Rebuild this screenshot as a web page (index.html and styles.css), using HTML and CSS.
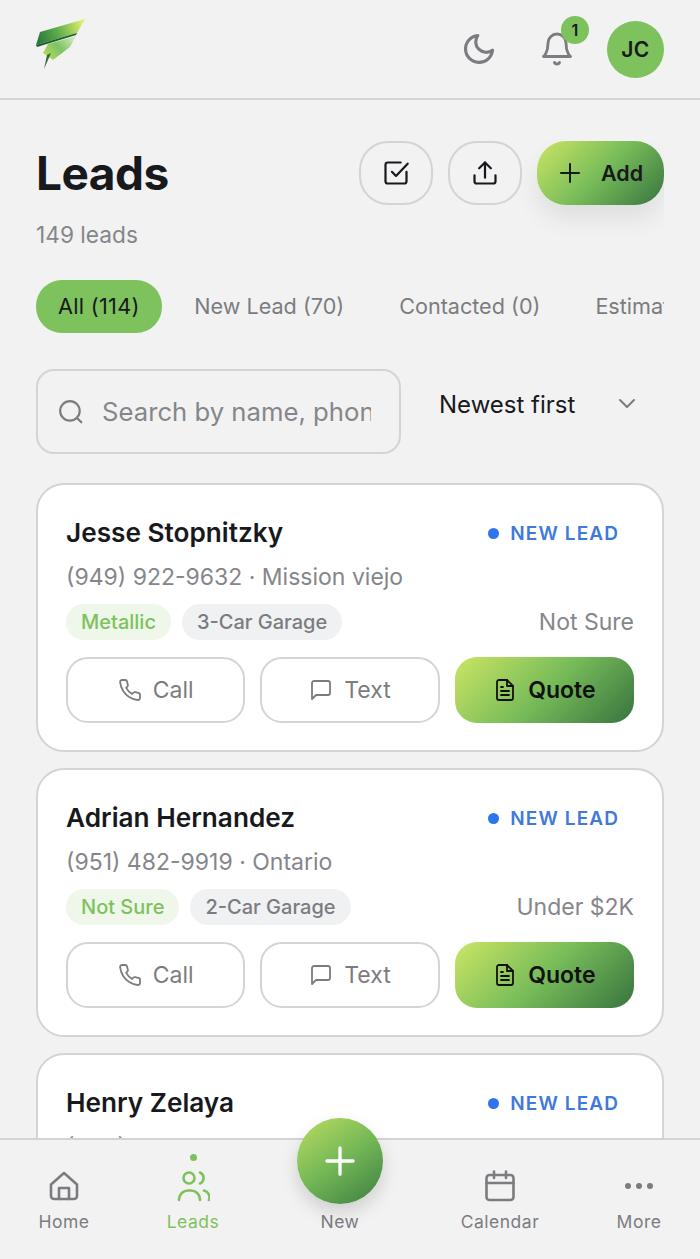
FILE: index.html
```html
<!DOCTYPE html>
<html lang="en">
  <head>
    <meta charset="UTF-8" />
    <meta name="viewport" content="width=device-width, initial-scale=1.0" />
    <title>Leads</title>
    <link rel="stylesheet" href="styles.css">
  </head>
  <body>
    <svg width="0" height="0" class="defs">
      <defs>
        <linearGradient id="wing-top" x1="0" y1="0.6" x2="1" y2="0.4">
          <stop offset="0" stop-color="#2a7a3a" />
          <stop offset="0.45" stop-color="#5fae4c" />
          <stop offset="1" stop-color="#dcef6c" />
        </linearGradient>
        <linearGradient id="wing-mid" x1="0" y1="0.8" x2="1" y2="0.2">
          <stop offset="0" stop-color="#b4dc60" />
          <stop offset="0.5" stop-color="#7fc262" />
          <stop offset="1" stop-color="#cfe9b8" />
        </linearGradient>
      </defs>
    </svg>

    <header class="topbar">
      <svg class="logo" viewBox="0 0 50 52">
        <polygon points="7,35 12,26 40,18 34,29 17,42" fill="url(#wing-mid)" />
        <polygon points="8,51 11,37 15,35" fill="#2f6b38" />
        <polygon points="0,27 4,14 49,1 41,15" fill="url(#wing-top)" />
        <polygon points="0,27 41,15 40,17 1,29" fill="#1d5f30" />
      </svg>
      <div class="topbar-right">
        <svg class="icon moon" viewBox="0 0 24 24"><path d="M21 12.8A9 9 0 1 1 11.2 3a7 7 0 0 0 9.8 9.8z" /></svg>
        <div class="bell">
          <svg class="icon" viewBox="0 0 24 24"><path d="M6 8a6 6 0 0 1 12 0c0 7 3 9 3 9H3s3-2 3-9" /><path d="M10.3 21a1.9 1.9 0 0 0 3.4 0" /></svg>
          <span class="bell-badge">1</span>
        </div>
        <div class="avatar">JC</div>
      </div>
    </header>

    <main class="page">
      <section class="page-head">
        <div>
          <h1>Leads</h1>
          <p class="lead-count">149 leads</p>
        </div>
        <div class="page-actions">
          <button class="round-btn">
            <svg class="icon" viewBox="0 0 24 24"><path d="M21 11v8a2 2 0 0 1-2 2H5a2 2 0 0 1-2-2V5a2 2 0 0 1 2-2h11" /><path d="M8.5 11l3.5 3.5L22 4" /></svg>
          </button>
          <button class="round-btn">
            <svg class="icon" viewBox="0 0 24 24"><path d="M3 14v5a2 2 0 0 0 2 2h14a2 2 0 0 0 2-2v-5" /><path d="M12 16V3" /><path d="M7 8l5-5 5 5" /></svg>
          </button>
          <button class="add-btn">
            <svg class="icon" viewBox="0 0 24 24"><path d="M12 3v18M3 12h18" /></svg>
            Add
          </button>
        </div>
      </section>

      <nav class="tabs">
        <div class="tab active">All (114)</div>
        <div class="tab">New Lead (70)</div>
        <div class="tab">Contacted (0)</div>
        <div class="tab">Estimate Sent (12)</div>
      </nav>

      <section class="filters">
        <div class="search">
          <svg class="icon" viewBox="0 0 24 24"><circle cx="11" cy="11" r="9" /><path d="M21.5 21.5l-4-4" /></svg>
          <input type="text" placeholder="Search by name, phone or city" />
        </div>
        <div class="sort">
          <span>Newest first</span>
          <svg class="icon" viewBox="0 0 24 24"><path d="M5 8l7 7 7-7" /></svg>
        </div>
      </section>

      <article class="card">
        <div class="card-row">
          <h2>Jesse Stopnitzky</h2>
          <span class="status">NEW LEAD</span>
        </div>
        <p class="contact">(949) 922-9632 · Mission viejo</p>
        <div class="card-row tag-row">
          <div class="tags">
            <span class="tag green">Metallic</span>
            <span class="tag">3-Car Garage</span>
          </div>
          <span class="budget">Not Sure</span>
        </div>
        <div class="card-actions">
          <button class="card-btn">
            <svg class="icon" viewBox="0 0 24 24"><path d="M22 17v3a2 2 0 0 1-2.2 2 19.8 19.8 0 0 1-8.6-3.1 19.5 19.5 0 0 1-6-6A19.8 19.8 0 0 1 2.1 4.2 2 2 0 0 1 4.1 2h3a2 2 0 0 1 2 1.7c.1 1 .4 1.9.7 2.8a2 2 0 0 1-.5 2.1L8.1 9.9a16 16 0 0 0 6 6l1.3-1.2a2 2 0 0 1 2.1-.5c.9.3 1.8.6 2.8.7a2 2 0 0 1 1.7 2.1z" /></svg>
            Call
          </button>
          <button class="card-btn">
            <svg class="icon" viewBox="0 0 24 24"><path d="M21 15a2 2 0 0 1-2 2H7l-4 4V5a2 2 0 0 1 2-2h14a2 2 0 0 1 2 2z" /></svg>
            Text
          </button>
          <button class="card-btn quote">
            <svg class="icon" viewBox="0 0 24 24"><path d="M14 2H6a2 2 0 0 0-2 2v16a2 2 0 0 0 2 2h12a2 2 0 0 0 2-2V8z" /><path d="M14 2v6h6" /><path d="M8 13h8M8 17h8M8 9h2" /></svg>
            Quote
          </button>
        </div>
      </article>

      <article class="card">
        <div class="card-row">
          <h2>Adrian Hernandez</h2>
          <span class="status">NEW LEAD</span>
        </div>
        <p class="contact">(951) 482-9919 · Ontario</p>
        <div class="card-row tag-row">
          <div class="tags">
            <span class="tag green">Not Sure</span>
            <span class="tag">2-Car Garage</span>
          </div>
          <span class="budget">Under $2K</span>
        </div>
        <div class="card-actions">
          <button class="card-btn">
            <svg class="icon" viewBox="0 0 24 24"><path d="M22 17v3a2 2 0 0 1-2.2 2 19.8 19.8 0 0 1-8.6-3.1 19.5 19.5 0 0 1-6-6A19.8 19.8 0 0 1 2.1 4.2 2 2 0 0 1 4.1 2h3a2 2 0 0 1 2 1.7c.1 1 .4 1.9.7 2.8a2 2 0 0 1-.5 2.1L8.1 9.9a16 16 0 0 0 6 6l1.3-1.2a2 2 0 0 1 2.1-.5c.9.3 1.8.6 2.8.7a2 2 0 0 1 1.7 2.1z" /></svg>
            Call
          </button>
          <button class="card-btn">
            <svg class="icon" viewBox="0 0 24 24"><path d="M21 15a2 2 0 0 1-2 2H7l-4 4V5a2 2 0 0 1 2-2h14a2 2 0 0 1 2 2z" /></svg>
            Text
          </button>
          <button class="card-btn quote">
            <svg class="icon" viewBox="0 0 24 24"><path d="M14 2H6a2 2 0 0 0-2 2v16a2 2 0 0 0 2 2h12a2 2 0 0 0 2-2V8z" /><path d="M14 2v6h6" /><path d="M8 13h8M8 17h8M8 9h2" /></svg>
            Quote
          </button>
        </div>
      </article>

      <article class="card">
        <div class="card-row">
          <h2>Henry Zelaya</h2>
          <span class="status">NEW LEAD</span>
        </div>
        <p class="contact">(909) 904-4710 · Al</p>
      </article>
    </main>

    <nav class="bottom-nav">
      <div class="nav-item">
        <svg class="icon" viewBox="0 0 32 32"><path d="M3 14.5 16 3l13 11.500V26a3 3 0 0 1-3 3H6a3 3 0 0 1-3-3z" /><path d="M11 29V18h10v11" /></svg>
        <span>Home</span>
      </div>
      <div class="nav-item active">
        <i class="nav-dot"></i>
        <svg class="icon leads-icon" viewBox="0 0 34 32"><circle cx="13" cy="8" r="5.500" /><path d="M24 2.500a6 6 0 0 1 0 11" /><path d="M3 30v-1a9 9 0 0 1 9-8.500h3a9 9 0 0 1 9 8.500v1" /><path d="M28 20.500a7 7 0 0 1 5 9.500" /></svg>
        <span>Leads</span>
      </div>
      <div class="nav-item nav-new">
        <button class="fab">
          <svg viewBox="0 0 32 32"><path d="M16 2v28M2 16h28" /></svg>
        </button>
        <span>New</span>
      </div>
      <div class="nav-item">
        <svg class="icon" viewBox="0 0 32 32"><rect x="2.500" y="5" width="27" height="25" rx="3" /><path d="M2.500 13h27M10 1.500V8M22 1.500V8" /></svg>
        <span>Calendar</span>
      </div>
      <div class="nav-item">
        <svg class="icon dots" viewBox="0 0 32 32"><circle cx="5" cy="16" r="3" /><circle cx="16" cy="16" r="3" /><circle cx="27" cy="16" r="3" /></svg>
        <span>More</span>
      </div>
    </nav>
  </body>
</html>
```

FILE: styles.css
```css
* {
  box-sizing: border-box;
}

html,
body {
  height: 100%;
}

body {
  margin: 0;
  position: relative;
  overflow: hidden;
  display: flex;
  flex-direction: column;
  font-family: "Inter", "Liberation Sans", sans-serif;
  background-color: #f2f2f3;
  color: #18191d;
}

button {
  font-family: inherit;
  cursor: pointer;
}

.defs {
  position: absolute;
}

.icon {
  fill: none;
  stroke: currentColor;
  stroke-width: 2;
  stroke-linecap: round;
  stroke-linejoin: round;
  flex: none;
}

/* top bar */
.topbar {
  height: 100px;
  flex: none;
  display: flex;
  align-items: center;
  justify-content: space-between;
  padding: 0 36px;
  border-bottom: 2px solid #d3d4d6;
}

.logo {
  width: 50px;
  height: 52px;
  margin-bottom: 10px;
}

.topbar-right {
  display: flex;
  align-items: center;
}

.moon {
  width: 36px;
  height: 36px;
  color: #7b7c80;
  stroke-width: 2.100;
}

.bell {
  position: relative;
  width: 36px;
  height: 36px;
  margin-left: 42px;
  color: #7b7c80;
}

.bell .icon {
  width: 36px;
  height: 36px;
  stroke-width: 1.900;
}

.bell-badge {
  position: absolute;
  top: -15px;
  left: 22px;
  width: 28px;
  height: 28px;
  border-radius: 50%;
  background-color: #7dc25c;
  color: #18191d;
  font-size: 16px;
  font-weight: 600;
  display: flex;
  align-items: center;
  justify-content: center;
}

.avatar {
  width: 57px;
  height: 57px;
  margin-left: 32px;
  border-radius: 50%;
  background-color: #7dc25c;
  font-size: 21px;
  font-weight: 600;
  letter-spacing: 0.5px;
  display: flex;
  align-items: center;
  justify-content: center;
}

/* page */
.page {
  flex: 1;
  min-height: 0;
  overflow: hidden;
  padding: 41px 36px 0;
}

.page-head {
  display: flex;
  justify-content: space-between;
  align-items: flex-start;
}

h1 {
  margin: 0;
  font-size: 46px;
  line-height: 64px;
  font-weight: 700;
  letter-spacing: -0.5px;
}

.lead-count {
  margin: 16px 0 0;
  font-size: 22.700px;
  line-height: 28px;
  color: #85868a;
}

.page-actions {
  display: flex;
  gap: 15px;
  clip-path: inset(0 0 -50px -50px);
}

.round-btn {
  width: 74px;
  height: 64px;
  border: 2px solid #d3d4d6;
  border-radius: 29px;
  background: none;
  color: #18191d;
  display: flex;
  align-items: center;
  justify-content: center;
}

.round-btn .icon {
  width: 28px;
  height: 28px;
  stroke-width: 1.900;
}

.add-btn {
  width: 127px;
  height: 64px;
  border: none;
  border-radius: 29px;
  background: linear-gradient(135deg, #cbe564 0%, #78bc59 50%, #37743f 100%);
  box-shadow: 0 14px 24px rgba(0, 0, 0, 0.08);
  color: #18191d;
  font-size: 21.500px;
  font-weight: 600;
  display: flex;
  align-items: center;
  justify-content: center;
  gap: 19px;
}

.add-btn .icon {
  width: 24px;
  height: 24px;
}

.tabs {
  display: flex;
  align-items: center;
  gap: 10px;
  margin-top: 31px;
  height: 53px;
  overflow: hidden;
  white-space: nowrap;
}

.tab {
  height: 53px;
  line-height: 53px;
  padding: 0 22.500px;
  font-size: 21.600px;
  color: #7b7c80;
  flex: none;
}

.tab.active {
  padding: 0 22px;
  font-size: 21.700px;
  letter-spacing: 0.3px;
  border-radius: 26px;
  background-color: #7dc25c;
  color: #18191d;
}

.filters {
  display: flex;
  align-items: flex-start;
  margin-top: 36px;
}

.search {
  width: 365px;
  height: 85px;
  flex: none;
  display: flex;
  align-items: center;
  gap: 18px;
  padding: 0 28px 0 20px;
  border: 2px solid #d3d4d6;
  border-radius: 18px;
  color: #7b7c80;
}

.search .icon {
  width: 26px;
  height: 26px;
}

.search input {
  flex: 1;
  min-width: 0;
  border: none;
  outline: none;
  padding: 0;
  background: none;
  font-family: inherit;
  font-size: 25.700px;
}

.search input::placeholder {
  color: #85868a;
  opacity: 1;
}

.sort {
  flex: 1;
  height: 70px;
  display: flex;
  align-items: center;
  justify-content: space-between;
  padding: 0 25px 0 38px;
  font-size: 24px;
}

.sort .icon {
  width: 24px;
  height: 24px;
  color: #7b7c80;
}

/* cards */
.card {
  height: 269px;
  margin-top: 16px;
  padding: 28px 28px 0;
  background-color: #fff;
  border: 2px solid #d3d4d6;
  border-radius: 28px;
}

.filters + .card {
  margin-top: 29px;
}

.card-row {
  display: flex;
  align-items: center;
  justify-content: space-between;
}

h2 {
  margin: 0;
  font-size: 26.200px;
  line-height: 40px;
  font-weight: 600;
}

.status {
  display: flex;
  align-items: center;
  gap: 11px;
  margin-right: 15px;
  font-size: 19px;
  font-weight: 600;
  letter-spacing: 1.100px;
  color: #3f79dc;
}

.status::before {
  content: "";
  width: 11px;
  height: 11px;
  border-radius: 50%;
  background-color: #2f75f0;
}

.contact {
  margin: 9px 0 0;
  font-size: 23px;
  line-height: 30px;
  color: #85868a;
}

.tag-row {
  margin-top: 12px;
}

.tags {
  display: flex;
  gap: 11px;
}

.tag {
  height: 36px;
  line-height: 36px;
  padding: 0 15px;
  border-radius: 18px;
  background-color: #f0f1f2;
  color: #7b7c80;
  font-size: 20px;
  font-weight: 500;
}

.tag.green {
  background-color: #eff7ea;
  color: #7dc25c;
}

.budget {
  font-size: 23px;
  color: #85868a;
}

.card-actions {
  display: grid;
  grid-template-columns: 1fr 1fr 1fr;
  gap: 15px;
  margin-top: 17px;
}

.card-btn {
  height: 66px;
  border: 2px solid #d3d4d6;
  border-radius: 22px;
  background: none;
  color: #7b7c80;
  font-size: 23px;
  display: flex;
  align-items: center;
  justify-content: center;
  gap: 11px;
}

.card-btn .icon {
  width: 24px;
  height: 24px;
  stroke-width: 1.800;
}

.card-btn.quote {
  border: none;
  background: linear-gradient(135deg, #cbe564 0%, #78bc59 50%, #37743f 100%);
  color: #111;
  font-weight: 600;
}

/* bottom nav */
.bottom-nav {
  position: absolute;
  left: 0;
  right: 0;
  bottom: 0;
  height: 121px;
  display: grid;
  grid-template-columns: 128px 130px 164px 156px 122px;
  border-top: 2px solid #d3d4d6;
  background-color: #f2f2f3;
}

.nav-item {
  position: relative;
  display: flex;
  flex-direction: column;
  align-items: center;
  padding-top: 30px;
  color: #7b7c80;
  font-size: 17.500px;
}

.nav-item .icon {
  width: 32px;
  height: 32px;
  stroke-width: 2.600;
}

.nav-item .leads-icon {
  width: 34px;
}

.nav-item span {
  margin-top: 8px;
  line-height: 24px;
  letter-spacing: 0.5px;
}

.nav-item.active {
  color: #7dc25c;
}

.nav-dot {
  position: absolute;
  top: 14px;
  width: 7px;
  height: 7px;
  border-radius: 50%;
  background-color: #7dc25c;
}

.icon.dots {
  fill: currentColor;
  stroke: none;
}

.nav-new span {
  margin-top: 40px;
}

.fab {
  position: absolute;
  top: -22px;
  left: 39px;
  width: 86px;
  height: 86px;
  border: none;
  border-radius: 50%;
  background: linear-gradient(145deg, #bcdc62 0%, #74b756 50%, #3b7d41 100%);
  box-shadow: 0 8px 18px rgba(0, 0, 0, 0.15);
  display: flex;
  align-items: center;
  justify-content: center;
}

.fab svg {
  width: 30px;
  height: 30px;
  fill: none;
  stroke: #fff;
  stroke-width: 3.500;
  stroke-linecap: round;
}
```
